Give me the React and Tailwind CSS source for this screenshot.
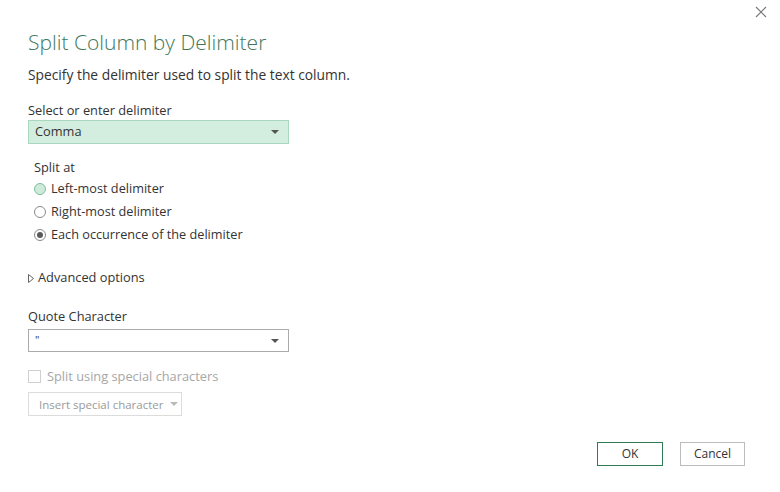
import { useState } from 'react';

const FONT = { fontFamily: '"Segoe UI", "Open Sans", "Noto Sans", sans-serif' };

function Caret({ className = 'border-t-[#555]' }) {
  return <span className={`w-0 h-0 border-l-[4px] border-r-[4px] border-t-[4px] border-l-transparent border-r-transparent ${className}`} />;
}

function Radio({ checked, hover }) {
  return (
    <span
      className={`w-[12px] h-[12px] rounded-full border flex items-center justify-center ${
        hover ? 'bg-[#cfeadb] border-[#7fbf9b]' : 'bg-white border-[#8a8a8a]'
      }`}
    >
      {checked && <span className="w-[6px] h-[6px] rounded-full bg-[#5a5a5a]" />}
    </span>
  );
}

export default function App() {
  const [splitAt, setSplitAt] = useState('each');

  const options = [
    { id: 'left', label: 'Left-most delimiter', hover: true },
    { id: 'right', label: 'Right-most delimiter' },
    { id: 'each', label: 'Each occurrence of the delimiter' },
  ];

  return (
    <div className="w-[780px] h-[492px] bg-white relative text-[#333]" style={FONT}>
      {/* close */}
      <button className="absolute right-[12px] top-[5px] w-[14px] h-[14px] flex items-center justify-center">
        <svg width="12" height="12" viewBox="0 0 12 12">
          <path d="M1 1 L11 11 M11 1 L1 11" stroke="#777" strokeWidth="1.1" />
        </svg>
      </button>

      <div className="pl-[28px] pt-[27px] flex flex-col">
        <h1 className="text-[21px] font-light leading-[30px] text-[#41775c]">Split Column by Delimiter</h1>
        <p className="mt-[8px] text-[13.8px] leading-[20px]">Specify the delimiter used to split the text column.</p>

        <label className="mt-[16px] text-[12.8px] leading-[18px]">Select or enter delimiter</label>
        <div className="mt-[1px] w-[261px] h-[24px] bg-[#d3eedf] border border-[#a9d7bd] flex items-center justify-between pl-[6px] pr-[9px] text-[12.8px]">
          <span>Comma</span>
          <Caret />
        </div>

        <div className="mt-[14px] pl-[6px] flex flex-col">
          <span className="text-[12.8px] leading-[18px]">Split at</span>
          <div className="flex flex-col mt-[1px]">
            {options.map((o) => (
              <div
                key={o.id}
                className="flex items-center gap-[5px] h-[23px] text-[12.7px] cursor-pointer"
                onClick={() => setSplitAt(o.id)}
              >
                <Radio checked={splitAt === o.id} hover={o.hover} />
                <span>{o.label}</span>
              </div>
            ))}
          </div>
        </div>

        <div className="mt-[22px] flex items-center gap-[4px] text-[12.8px] h-[20px]">
          <svg width="6" height="9" viewBox="0 0 6 9">
            <path d="M0.5 0.5 L5.5 4.5 L0.5 8.5 Z" fill="none" stroke="#666" strokeWidth="1" />
          </svg>
          <span>Advanced options</span>
        </div>

        <label className="mt-[19px] text-[12.8px] leading-[18px]">Quote Character</label>
        <div className="mt-[4px] w-[261px] h-[23px] bg-white border border-[#ababab] flex items-center justify-between pl-[6px] pr-[9px] text-[11px]">
          <span>"</span>
          <Caret />
        </div>

        <div className="mt-[15px] flex items-center gap-[6px] text-[12.8px] text-[#a6a6a6]">
          <span className="w-[13px] h-[13px] border border-[#d0d0d0] bg-white" />
          <span>Split using special characters</span>
        </div>

        <button className="mt-[6px] w-[154px] h-[24px] border border-[#dcdcdc] bg-white flex items-center pl-[10px] gap-[7px] text-[11.5px] text-[#9a9a9a] whitespace-nowrap">
          <span>Insert special character</span>
          <Caret className="border-t-[#bbb]" />
        </button>
      </div>

      <div className="absolute right-[35px] bottom-[26px] flex gap-[17px]">
        <button className="w-[66px] h-[24px] border border-[#2f7a52] text-[12px] text-[#333] bg-white">OK</button>
        <button className="w-[65px] h-[24px] border border-[#bcbcbc] text-[12px] text-[#333] bg-white">Cancel</button>
      </div>
    </div>
  );
}
